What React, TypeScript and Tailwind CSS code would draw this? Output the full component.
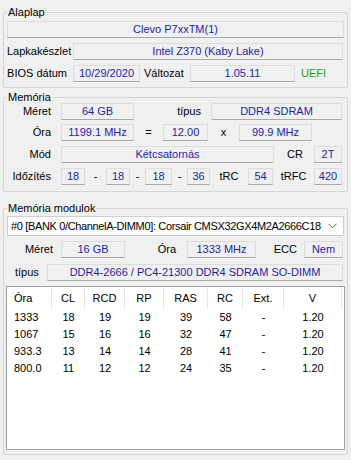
import React from "react";

const BLUE = "text-[#1f1fa8]";

function F({ w, children, className = "" }: { w: string; children?: React.ReactNode; className?: string }) {
  return (
    <div
      className={`${w} h-[17px] shrink-0 flex items-center justify-center bg-[#f0f0f0] border border-[#dcdcdc] border-b-[#a9a9a9] ${BLUE} whitespace-nowrap ${className}`}
    >
      {children}
    </div>
  );
}

function L({ w, children, className = "" }: { w: string; children?: React.ReactNode; className?: string }) {
  return <div className={`${w} shrink-0 whitespace-nowrap ${className}`}>{children}</div>;
}

function Group({ title, className = "", children }: { title: string; className?: string; children: React.ReactNode }) {
  return (
    <div className={`relative border border-[#d5d5d5] rounded-[2px] ${className}`}>
      <span className="absolute left-[3px] -top-[8px] bg-[#f0f0f0] px-[1px] leading-[14px] text-black">{title}</span>
      {children}
    </div>
  );
}

const cols = ["Óra", "CL", "RCD", "RP", "RAS", "RC", "Ext.", "V"];
const rows = [
  ["1333", "18", "19", "19", "39", "58", "-", "1.20"],
  ["1067", "15", "16", "16", "32", "47", "-", "1.20"],
  ["933.3", "13", "14", "14", "28", "41", "-", "1.20"],
  ["800.0", "11", "12", "12", "24", "35", "-", "1.20"],
];

export default function App() {
  return (
    <div
      className="w-[351px] h-[460px] bg-[#f0f0f0] px-[3px] pt-[12px] text-[11px] leading-[13px] text-black overflow-hidden"
      style={{ fontFamily: '"Liberation Sans", Arial, sans-serif' }}
    >
      {/* Alaplap */}
      <Group title="Alaplap" className="px-[3px] pt-[8px] pb-[5px] flex flex-col gap-[5px]">
        <F w="w-full">Clevo P7xxTM(1)</F>
        <div className="flex items-center">
          <L w="w-[66px]">Lapkakészlet</L>
          <F w="w-[270px]">Intel Z370 (Kaby Lake)</F>
        </div>
        <div className="flex items-center">
          <L w="w-[66px]" className="text-right pr-[6px]">BIOS dátum</L>
          <F w="w-[67px]">10/29/2020</F>
          <L w="w-[50px]" className="pl-[4px]">Változat</L>
          <F w="w-[105px]">1.05.11</F>
          <L w="w-[40px]" className="pl-[6px] text-[#1e9e1e]">UEFI</L>
        </div>
      </Group>

      {/* Memória */}
      <Group title="Memória" className="mt-[9px] px-[3px] pt-[5px] pb-[6px] flex flex-col">
        <div className="flex items-center">
          <L w="w-[54px]" className="text-right pr-[10px]">Méret</L>
          <F w="w-[73px]">64 GB</F>
          <L w="w-[77px]" className="text-right pr-[10px]">típus</L>
          <F w="w-[131px]">DDR4 SDRAM</F>
        </div>
        <div className="flex items-center mt-[4px]">
          <L w="w-[54px]" className="text-right pr-[10px]">Óra</L>
          <F w="w-[73px]">1199.1 MHz</F>
          <L w="w-[29px]" className="text-center">=</L>
          <F w="w-[45px]">12.00</F>
          <L w="w-[31px]" className="text-center">x</L>
          <F w="w-[73px]">99.9 MHz</F>
        </div>
        <div className="flex items-center mt-[5px]">
          <L w="w-[54px]" className="text-right pr-[10px]">Mód</L>
          <F w="w-[213px]">Kétcsatornás</F>
          <L w="w-[40px]" className="text-right pr-[11px]">CR</L>
          <F w="w-[28px]">2T</F>
        </div>
        <div className="flex items-center mt-[5px]">
          <L w="w-[54px]" className="text-right pr-[10px]">Időzítés</L>
          <F w="w-[24px]">18</F>
          <L w="w-[21px]" className="text-center">-</L>
          <F w="w-[24px]">18</F>
          <L w="w-[15px]" className="text-center">-</L>
          <F w="w-[27px]">18</F>
          <L w="w-[15px]" className="text-center">-</L>
          <F w="w-[23px]">36</F>
          <L w="w-[38px]" className="text-center">tRC</L>
          <F w="w-[25px]">54</F>
          <L w="w-[41px]" className="text-center">tRFC</L>
          <F w="w-[28px]">420</F>
        </div>
      </Group>

      {/* Memória modulok */}
      <Group title="Memória modulok" className="mt-[16px] px-[3px] pt-[7px] pb-[4px] flex flex-col">
        <div className="h-[20px] w-full bg-white border border-[#cfcfcf] flex items-center pl-[3px] pr-[6px] justify-between whitespace-nowrap overflow-hidden">
          <span className="tracking-[-0.35px]">#0 [BANK 0/ChannelA-DIMM0]: Corsair CMSX32GX4M2A2666C18</span>
          <svg width="9" height="6" viewBox="0 0 9 6" className="shrink-0">
            <path d="M0.5 0.8 L4.5 4.8 L8.5 0.8" fill="none" stroke="#5a5a5a" strokeWidth="1" />
          </svg>
        </div>
        <div className="flex items-center mt-[5px]">
          <L w="w-[54px]" className="text-right pr-[8px]">Méret</L>
          <F w="w-[64px]">16 GB</F>
          <L w="w-[62px]" className="text-right pr-[11px]">Óra</L>
          <F w="w-[69px]">1333 MHz</F>
          <L w="w-[48px]" className="text-right pr-[7px]">ECC</L>
          <F w="w-[39px]">Nem</F>
        </div>
        <div className="flex items-center mt-[6px]">
          <L w="w-[40px]" className="pl-[8px]">típus</L>
          <F w="w-[296px]">DDR4-2666 / PC4-21300 DDR4 SDRAM SO-DIMM</F>
        </div>
        <div className="mt-[5px] -mx-[1px] h-[164px] bg-white border border-[#a0a0a0]">
          <div className="grid grid-cols-[45px_33px_40px_39px_44px_35px_41px_58px] h-[22px]">
            {cols.map((c, i) => (
              <div
                key={c}
                className={`flex items-center border-r border-[#e5e5e5] ${i === 0 ? "pl-[7px]" : "justify-center"}`}
              >
                {c}
              </div>
            ))}
          </div>
          {rows.map((r, ri) => (
            <div key={ri} className="grid grid-cols-[45px_33px_40px_39px_44px_35px_41px_58px] h-[17px]">
              {r.map((v, i) => (
                <div key={i} className={`flex items-center ${i === 0 ? "pl-[7px]" : "justify-center"}`}>
                  {v}
                </div>
              ))}
            </div>
          ))}
        </div>
      </Group>
    </div>
  );
}
